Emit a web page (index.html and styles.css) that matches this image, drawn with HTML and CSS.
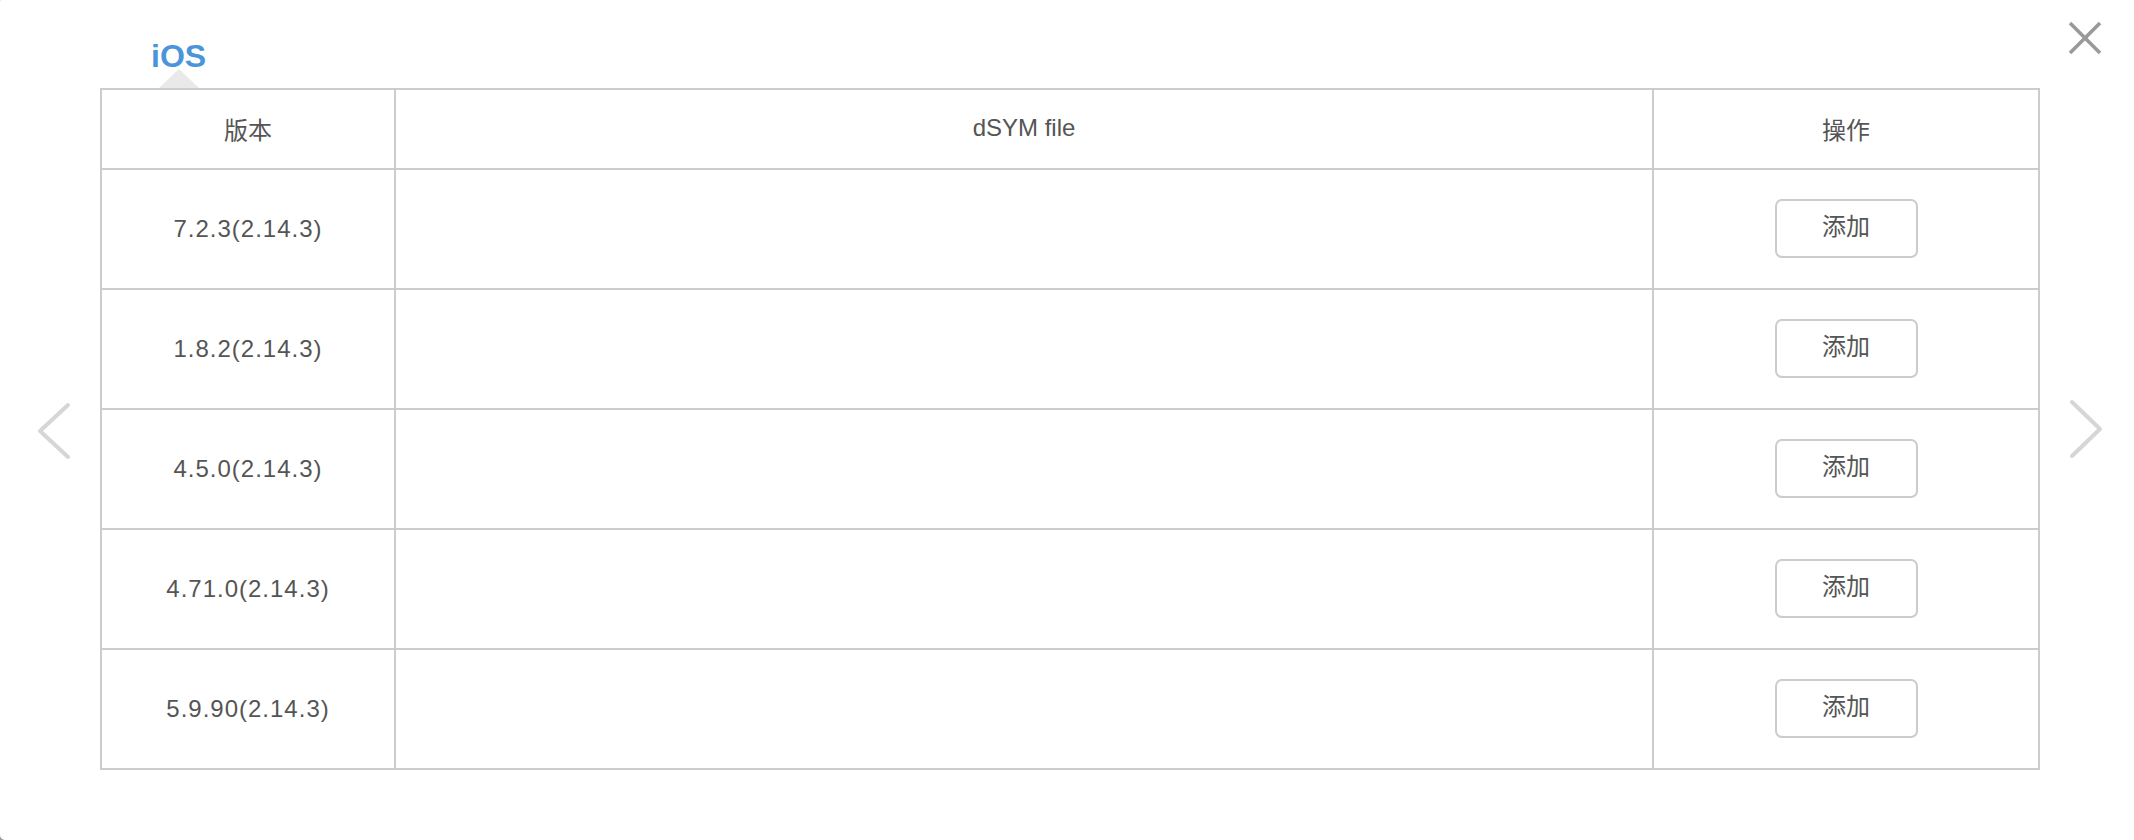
FILE: index.html
```html
<!DOCTYPE html>
<html lang="zh">
<head>
<meta charset="utf-8">
<title>dSYM</title>
<link rel="stylesheet" href="styles.css">
</head>
<body>
<div class="modal">
  <div class="side side-left">
    <svg class="chev" width="40" height="64" viewBox="0 0 40 64"><polyline points="34,6 6,32 34,58" /></svg>
  </div>
  <div class="main">
    <div class="tabs">
      <div class="tab">iOS</div>
    </div>
    <table class="grid">
      <thead>
        <tr class="head-row">
          <th class="c1">版本</th>
          <th class="c2">dSYM file</th>
          <th class="c3">操作</th>
        </tr>
      </thead>
      <tbody>
        <tr class="row"><td class="ver">7.2.3(2.14.3)</td><td></td><td><button class="btn">添加</button></td></tr>
        <tr class="row"><td class="ver">1.8.2(2.14.3)</td><td></td><td><button class="btn">添加</button></td></tr>
        <tr class="row"><td class="ver">4.5.0(2.14.3)</td><td></td><td><button class="btn">添加</button></td></tr>
        <tr class="row"><td class="ver">4.71.0(2.14.3)</td><td></td><td><button class="btn">添加</button></td></tr>
        <tr class="row"><td class="ver">5.9.90(2.14.3)</td><td></td><td><button class="btn">添加</button></td></tr>
      </tbody>
    </table>
  </div>
  <div class="side side-right">
    <svg class="chev" width="40" height="64" viewBox="0 0 40 64"><polyline points="6,5 34,32 6,59" /></svg>
  </div>
  <button class="close" aria-label="close">
    <svg width="36" height="36" viewBox="0 0 36 36"><line x1="3" y1="3" x2="33" y2="33"/><line x1="33" y1="3" x2="3" y2="33"/></svg>
  </button>
</div>
</body>
</html>
```
FILE: styles.css
```css
html, body {
  margin: 0;
  padding: 0;
  background: #9a9a9a;
}
.modal {
  position: relative;
  width: 2134px;
  height: 840px;
  background: #fff;
  border-radius: 1px 0 0 5px;
  display: flex;
  font-family: "Liberation Sans", "Noto Sans CJK SC", sans-serif;
  color: #555;
}
.side {
  flex: none;
  box-sizing: border-box;
}
.side-left {
  width: 100px;
  padding-top: 399px;
  padding-left: 34px;
}
.side-right {
  width: 94px;
  padding-top: 397px;
  padding-left: 26px;
}
.chev {
  display: block;
}
.chev polyline {
  fill: none;
  stroke: #d6d6d6;
  stroke-width: 4;
  stroke-linecap: round;
  stroke-linejoin: round;
}
.main {
  width: 1940px;
  flex: none;
}
.tabs {
  height: 88px;
  display: flex;
  align-items: flex-end;
  padding-left: 51px;
  box-sizing: border-box;
}
.tab {
  position: relative;
  font-family: "Liberation Sans", sans-serif;
  font-weight: bold;
  font-size: 32px;
  line-height: 24px;
  padding-bottom: 20px;
  color: #4a95da;
}
.tab::after {
  content: "";
  position: absolute;
  left: 50%;
  bottom: 0;
  margin-left: -20px;
  width: 0;
  height: 0;
  border-left: 20px solid transparent;
  border-right: 20px solid transparent;
  border-bottom: 19px solid #e9e9e9;
}
.grid {
  width: 1940px;
  table-layout: fixed;
  border-collapse: separate;
  border-spacing: 0;
  border-top: 2px solid #cccccc;
  border-left: 2px solid #cccccc;
  box-sizing: border-box;
}
.grid th, .grid td {
  box-sizing: border-box;
  padding: 0;
  border-right: 2px solid #cccccc;
  border-bottom: 2px solid #cccccc;
  text-align: center;
  vertical-align: middle;
  font-size: 24px;
  font-weight: normal;
  color: #555;
}
.grid th {
  padding-bottom: 2px;
}
.c1 { width: 294px; }
.c2 { width: 1258px; }
.c3 { width: 386px; }
.head-row { height: 80px; }
.row { height: 120px; }
.ver {
  letter-spacing: 1px;
  padding-bottom: 2px;
}
.btn {
  width: 143px;
  height: 59px;
  margin-top: -2px;
  border: 2px solid #cccccc;
  border-radius: 7px;
  background: #fff;
  font-family: "Liberation Sans", "Noto Sans CJK SC", sans-serif;
  font-size: 24px;
  line-height: 24px;
  color: #555;
  padding: 0 0 3px;
  cursor: pointer;
}
.close {
  position: absolute;
  top: 20px;
  right: 31px;
  padding: 0;
  margin: 0;
  border: 0;
  background: transparent;
  width: 36px;
  height: 36px;
  cursor: pointer;
}
.close svg {
  display: block;
}
.close line {
  stroke: #999999;
  stroke-width: 3.5;
}
```
